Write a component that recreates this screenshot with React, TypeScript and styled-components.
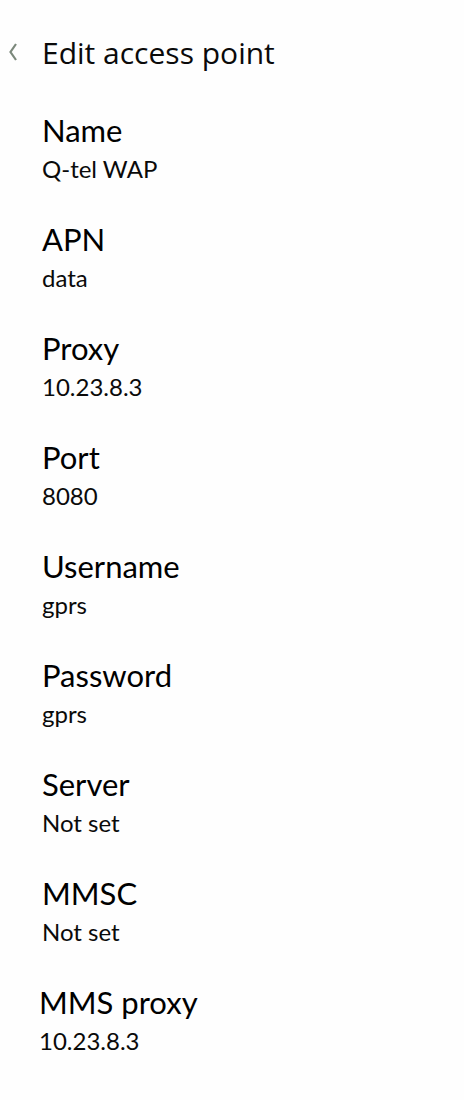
import React from "react";
import styled, { createGlobalStyle } from "styled-components";

const Global = createGlobalStyle`
  html, body { margin: 0; padding: 0; background: #fefefe; }
  body { font-family: Lato, "Open Sans", sans-serif; color: #000; }
`;

const Page = styled.div`
  width: 464px;
  min-height: 1100px;
  background: #fefefe;
`;

const Header = styled.div`
  display: flex;
  align-items: center;
  height: 96px;
  box-sizing: border-box;
  padding: 35px 0 25px 7px;
`;

const Back = styled.svg`
  width: 12px;
  height: 20px;
  margin-right: 23px;
  margin-top: -2px;
`;

const Title = styled.h1`
  margin: 0;
  font-family: "Open Sans", sans-serif;
  font-weight: 400;
  font-size: 30px;
  line-height: 36px;
  color: #0a0a0a;
`;

const Item = styled.div<{ $shift?: number }>`
  display: flex;
  flex-direction: column;
  height: 109px;
  box-sizing: border-box;
  padding: 16px 0 0 ${(p) => 42 - (p.$shift ?? 0)}px;
`;

const Label = styled.div`
  font-family: Lato, sans-serif;
  font-size: 31px;
  line-height: 36px;
  color: #000;
`;

const Value = styled.div`
  margin-top: 7px;
  font-family: Lato, sans-serif;
  font-size: 24px;
  line-height: 28px;
  color: #0a0a0a;
`;

const items: [string, string, number?][] = [
  ["Name", "Q-tel WAP"],
  ["APN", "data"],
  ["Proxy", "10.23.8.3"],
  ["Port", "8080"],
  ["Username", "gprs"],
  ["Password", "gprs"],
  ["Server", "Not set"],
  ["MMSC", "Not set"],
  ["MMS proxy", "10.23.8.3", 3],
];

export default function App() {
  return (
    <Page>
      <Global />
      <Header>
        <Back viewBox="0 0 12 20">
          <polyline points="9,2 3.5,10 9,18" fill="none" stroke="#7b887b" strokeWidth="2.2" />
        </Back>
        <Title>Edit access point</Title>
      </Header>
      {items.map(([l, v, s]) => (
        <Item key={l} $shift={s}>
          <Label>{l}</Label>
          <Value>{v}</Value>
        </Item>
      ))}
    </Page>
  );
}
